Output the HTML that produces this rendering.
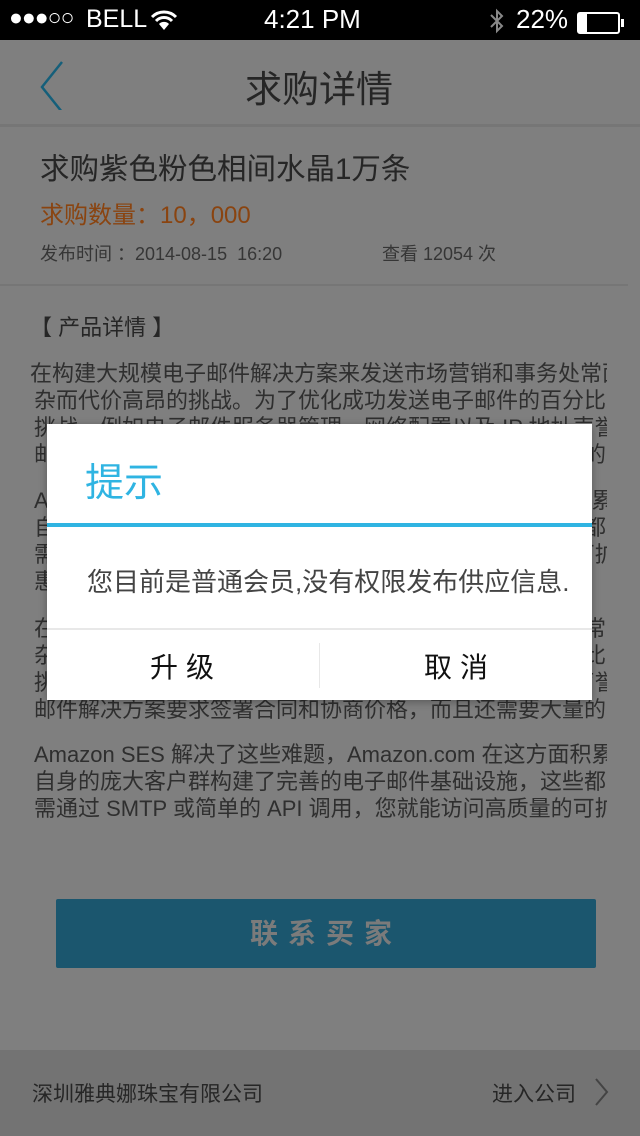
<!DOCTYPE html>
<html><head><meta charset="utf-8"><style>
*{margin:0;padding:0;box-sizing:border-box}
body{width:640px;height:1136px;overflow:hidden;background:#7f7f7f;font-family:"Liberation Sans","Noto Sans CJK SC",sans-serif;position:relative;color:#333}
.abs{position:absolute;white-space:nowrap}
.sb{position:absolute;left:0;top:0;width:640px;height:40px;background:#000;color:#fff}
.clip{position:absolute;left:0;top:350px;width:607px;height:480px;overflow:hidden}
.l{position:absolute;white-space:nowrap;font-size:22px;color:#2f2f2f;line-height:27px}
</style></head><body>
<div class="sb">
 <div class="abs" style="left:9px;top:4px;font-size:23px;letter-spacing:-1px">●●●○○</div>
 <div class="abs" style="left:86px;top:5px;font-size:25px">BELL</div>
 <svg class="abs" style="left:150px;top:9px" width="28" height="22" viewBox="0 0 28 22"><path d="M2 8 A17 17 0 0 1 26 8" stroke="#fff" stroke-width="3" fill="none"/><path d="M6 12 A11 11 0 0 1 22 12" stroke="#fff" stroke-width="3" fill="none"/><path d="M14 21 L9 15 A7 7 0 0 1 19 15 Z" fill="#fff"/></svg>
 <div class="abs" style="left:264px;top:4px;font-size:26px">4:21 PM</div>
 <svg class="abs" style="left:488px;top:8px" width="18" height="26" viewBox="0 0 18 26"><path d="M3 7 L14 18 L9 23 L9 3 L14 8 L3 19" stroke="#888" stroke-width="2" fill="none"/></svg>
 <div class="abs" style="left:516px;top:4px;font-size:26px">22%</div>
 <div class="abs" style="left:577px;top:12px;width:43px;height:22px;border:2px solid #fff;border-radius:3px"><div style="width:8px;height:100%;background:#fff"></div></div>
 <div class="abs" style="left:621px;top:19px;width:3px;height:8px;background:#fff"></div>
</div>
<svg class="abs" style="left:38px;top:60px" width="30" height="50" viewBox="0 0 30 50"><path d="M24 16 L4 41 L24 66" transform="translate(0,-14)" stroke="#155f7a" stroke-width="2.5" fill="none"/></svg>
<div class="abs" style="left:245px;top:59px;font-size:37px;color:#262626">求购详情</div>
<div class="abs" style="left:0;top:124px;width:640px;height:3px;background:#767676"></div>
<div class="abs" style="left:40px;top:146px;font-size:29.5px;color:#262626">求购紫色粉色相间水晶1万条</div>
<div class="abs" style="left:40px;top:195px;font-size:24px;color:#8a4410">求购数量：10，000</div>
<div class="abs" style="left:40px;top:240px;font-size:18px;color:#363636">发布时间 ：2014-08-15&nbsp;&nbsp;16:20</div>
<div class="abs" style="left:382px;top:240px;font-size:18px;color:#363636">查看 12054 次</div>
<div class="abs" style="left:0;top:284px;width:628px;height:2px;background:#767676"></div>
<div class="abs" style="left:30px;top:310px;font-size:22px;color:#262626">【 产品详情 】</div>
<div class="clip">
 <div class="l" style="left:30px;top:10px">在构建大规模电子邮件解决方案来发送市场营销和事务处常面临的</div>
 <div class="l" style="left:34px;top:37px">杂而代价高昂的挑战。为了优化成功发送电子邮件的百分比，需要</div>
 <div class="l" style="left:34px;top:64px">挑战，例如电子邮件服务器管理、网络配置以及 IP 地址声誉等</div>
 <div class="l" style="left:34px;top:91px">邮件解决方案要求签署合同和协商价格，而且还需要大量的</div>
 <div class="l" style="left:34px;top:137px">Amazon SES 解决了这些难题，Amazon.com 在这方面积累</div>
 <div class="l" style="left:34px;top:164px">自身的庞大客户群构建了完善的电子邮件基础设施，这些都多</div>
 <div class="l" style="left:34px;top:191px">需通过 SMTP 或简单的 API 调用，您就能访问高质量的可扩</div>
 <div class="l" style="left:34px;top:218px">惠</div>
 <div class="l" style="left:34px;top:265px">在构建大规模电子邮件解决方案来发送市场营销和事务处常面临理</div>
 <div class="l" style="left:34px;top:292px">杂而代价高昂的挑战。为了优化成功发送电子邮件的百分比</div>
 <div class="l" style="left:34px;top:319px">挑战，例如电子邮件服务器管理、网络配置以及 IP 地址声誉</div>
 <div class="l" style="left:34px;top:346px">邮件解决方案要求签署合同和协商价格，而且还需要大量的</div>
 <div class="l" style="left:34px;top:391px">Amazon SES 解决了这些难题，Amazon.com 在这方面积累</div>
 <div class="l" style="left:34px;top:418px">自身的庞大客户群构建了完善的电子邮件基础设施，这些都</div>
 <div class="l" style="left:34px;top:445px">需通过 SMTP 或简单的 API 调用，您就能访问高质量的可扩</div>
</div>
<div class="abs" style="left:56px;top:899px;width:540px;height:69px;background:#1b566e;border-radius:2px;text-align:center;line-height:69px;font-size:28px;color:#7b7b7b;letter-spacing:10px;font-weight:bold">联系买家</div>
<div class="abs" style="left:0;top:1050px;width:640px;height:86px;background:#737373"></div>
<div class="abs" style="left:32px;top:1078px;font-size:21px;color:#262626">深圳雅典娜珠宝有限公司</div>
<div class="abs" style="left:492px;top:1078px;font-size:21px;color:#262626">进入公司</div>
<svg class="abs" style="left:592px;top:1076px" width="20" height="32" viewBox="0 0 20 32"><path d="M4 3 L15 16 L4 29" stroke="#444" stroke-width="2" fill="none"/></svg>

<div class="abs" style="left:47px;top:424px;width:545px;height:276px;background:#fff;box-shadow:0 2px 8px rgba(0,0,0,.3)">
 <div class="abs" style="left:38px;top:28px;font-size:39px;color:#2fb4e2">提示</div>
 <div class="abs" style="left:0;top:99px;width:545px;height:4px;background:#2fb4e2"></div>
 <div class="abs" style="left:40px;top:138px;font-size:26px;color:#444">您目前是普通会员,没有权限发布供应信息.</div>
 <div class="abs" style="left:0;top:204px;width:545px;height:2px;background:#e8e8e8"></div>
 <div class="abs" style="left:272px;top:219px;width:1px;height:45px;background:#e8e8e8"></div>
 <div class="abs" style="left:103px;top:222px;font-size:28px;color:#111;letter-spacing:8px">升级</div>
 <div class="abs" style="left:377px;top:222px;font-size:28px;color:#111;letter-spacing:8px">取消</div>
</div>
</body></html>
